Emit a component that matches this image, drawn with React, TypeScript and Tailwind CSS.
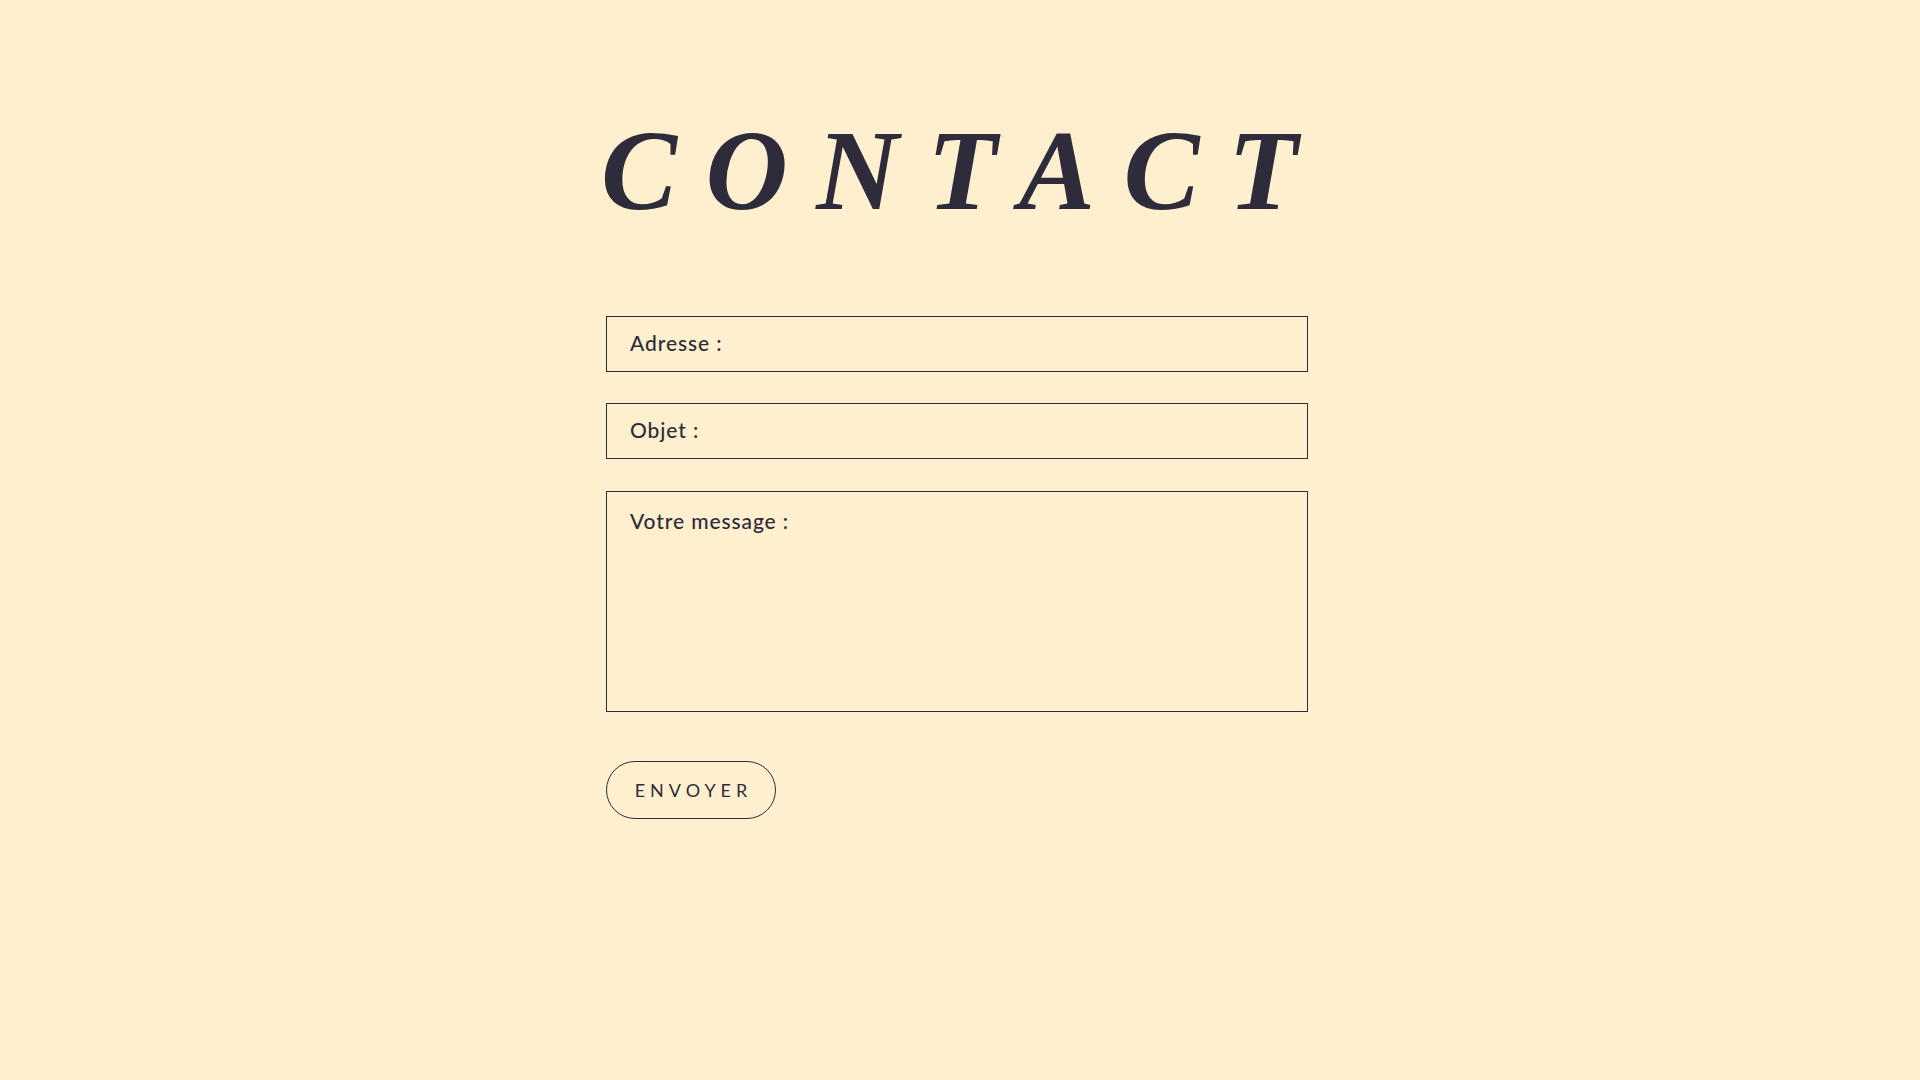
import React from "react";

export default function App() {
  return (
    <div className="min-h-screen w-full bg-[#fef0ce] text-[#2e2b3b]">
      <div className="mx-auto w-[708px] pr-[6px] pt-[114px]">
        <h1
          className="-ml-[5px] text-[114px] leading-none font-bold italic tracking-[28.5px]"
          style={{ fontFamily: '"Liberation Serif", "DejaVu Serif", serif' }}
        >
          CONTACT
        </h1>

        <form
          className="mt-[88px] flex flex-col"
          style={{ fontFamily: 'Lato, "Open Sans", sans-serif' }}
          onSubmit={(e) => e.preventDefault()}
        >
          <input
            type="email"
            placeholder="Adresse :"
            className="h-[56px] w-full border border-[#2e2b3b] bg-transparent px-[23px] pb-[3px] text-[21px] font-medium tracking-[0.9px] text-[#2e2b3b] placeholder:text-[#2e2b3b] outline-none"
          />
          <input
            type="text"
            placeholder="Objet :"
            className="mt-[31px] h-[56px] w-full border border-[#2e2b3b] bg-transparent px-[23px] pb-[3px] text-[21px] font-medium tracking-[0.9px] text-[#2e2b3b] placeholder:text-[#2e2b3b] outline-none"
          />
          <textarea
            placeholder="Votre message :"
            className="mt-[32px] h-[221px] w-full resize-none border border-[#2e2b3b] bg-transparent px-[23px] pt-[15px] text-[21px] font-medium leading-[28px] tracking-[0.9px] text-[#2e2b3b] placeholder:text-[#2e2b3b] outline-none"
          />
          <div className="mt-[49px]">
            <button
              type="submit"
              className="h-[58px] w-[170px] rounded-full border border-[#2e2b3b] pl-[5px] text-[18px] tracking-[5px] text-[#2e2b3b]"
            >
              ENVOYER
            </button>
          </div>
        </form>
      </div>
    </div>
  );
}
